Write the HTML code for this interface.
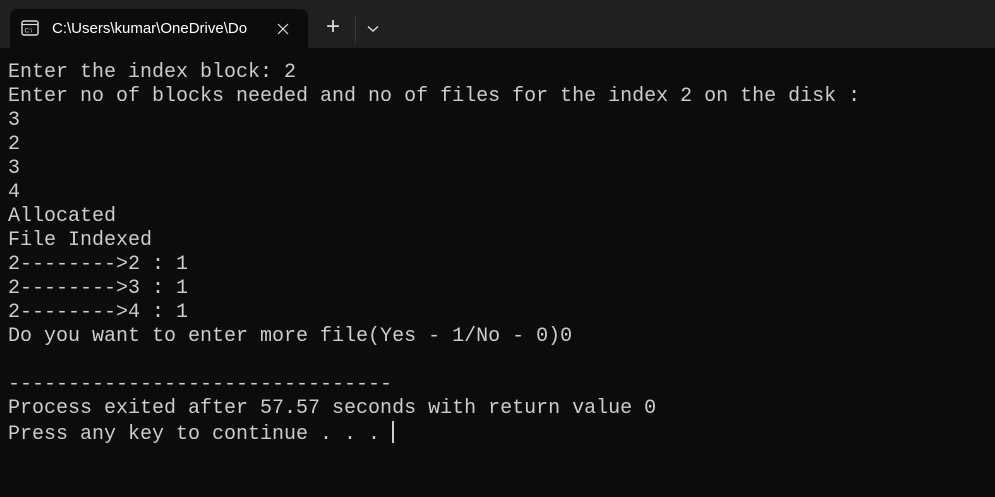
<!DOCTYPE html><html><head><style>
body{margin:0;width:995px;height:497px;background:#0c0c0c;overflow:hidden;font-family:"Liberation Sans",sans-serif}
.bar{position:absolute;left:0;top:0;width:995px;height:48px;background:#202020}
.tab{position:absolute;left:10px;top:9px;width:298px;height:39px;background:#0c0c0c;border-radius:8px 8px 0 0}
.title{position:absolute;left:52px;top:20px;color:#fff;font-size:15px}
.plus{position:absolute;left:326px;top:13px;color:#ddd;font-size:24px;font-weight:300}
.sep{position:absolute;left:355px;top:15px;width:1px;height:28px;background:#3a3a3a}
pre{position:absolute;left:8px;top:61px;margin:0;font-family:"Liberation Mono",monospace;font-size:20px;line-height:24px;color:#cccccc}
.cur{display:inline-block;width:2px;height:22px;background:#ccc;vertical-align:-4px}
</style></head><body>
<div class="bar"></div><div class="tab"></div>
<svg style="position:absolute;left:21px;top:20px" width="18" height="16" viewBox="0 0 18 16"><rect x="1" y="1" width="16" height="14" rx="2" fill="none" stroke="#ddd" stroke-width="1.4"/><line x1="1" y1="4.5" x2="17" y2="4.5" stroke="#ddd" stroke-width="1.2"/><text x="3.5" y="12.5" font-size="6" fill="#ddd" font-family="Liberation Sans">C:\</text></svg>
<div class="title">C:\Users\kumar\OneDrive\Do</div>
<svg style="position:absolute;left:277px;top:23px" width="12" height="12"><path d="M1 1 L11 11 M11 1 L1 11" stroke="#ddd" stroke-width="1.2"/></svg>
<div class="plus">+</div>
<div class="sep"></div>
<svg style="position:absolute;left:367px;top:25px" width="12" height="8"><path d="M1 1.5 L6 6 L11 1.5" fill="none" stroke="#ddd" stroke-width="1.4"/></svg>
<pre>Enter the index block: 2
Enter no of blocks needed and no of files for the index 2 on the disk :
3
2
3
4
Allocated
File Indexed
2-------->2 : 1
2-------->3 : 1
2-------->4 : 1
Do you want to enter more file(Yes - 1/No - 0)0

--------------------------------
Process exited after 57.57 seconds with return value 0
Press any key to continue . . . <span class="cur"></span></pre>
</body></html>
